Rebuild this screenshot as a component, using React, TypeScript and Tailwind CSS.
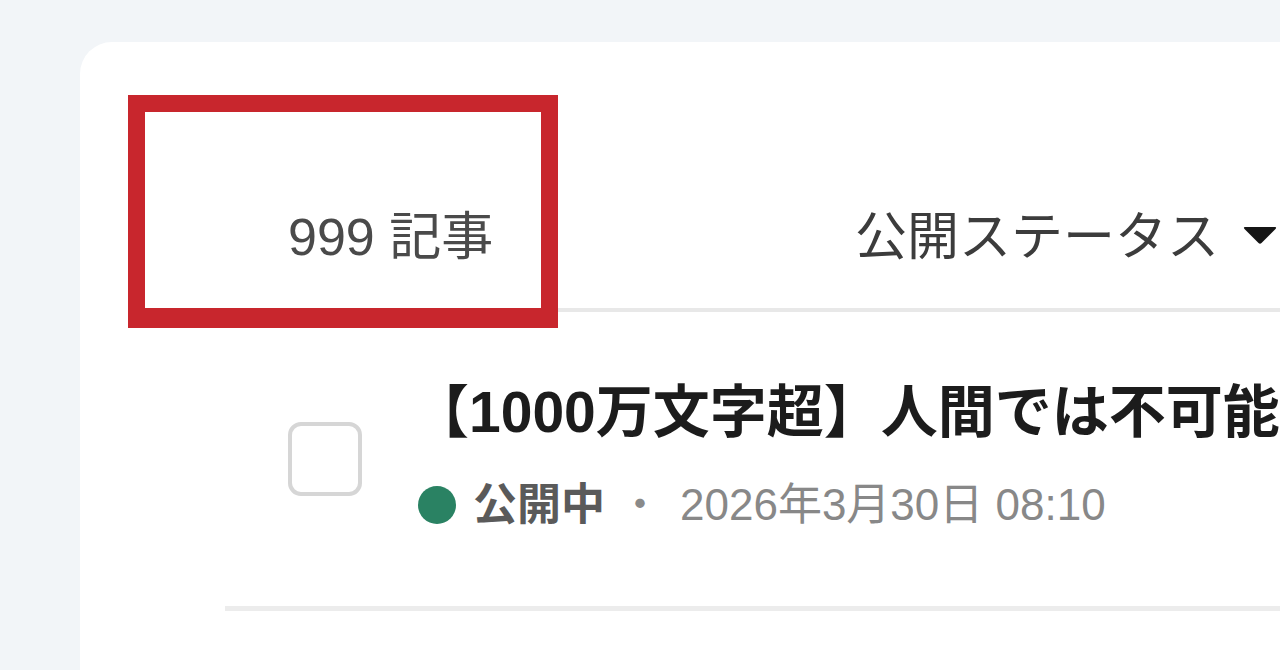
import React from "react";

const FONT = {
  fontFamily: '"Liberation Sans", "Noto Sans CJK JP", sans-serif',
};

export default function App() {
  return (
    <div
      className="w-[1280px] h-[670px] overflow-hidden bg-[#f2f5f8] pt-[42px] pl-[80px]"
      style={FONT}
    >
      <div className="relative w-[1300px] h-[700px] bg-white rounded-tl-[32px] pl-[145px]">
        {/* Header */}
        <div className="flex items-end h-[270px] pb-[45px] border-b-[4px] border-[#e8e8e8]">
          <div className="w-[630px] pl-[63px] text-[52px] leading-none text-[#4a4a4a] whitespace-nowrap">
            999 記事
          </div>
          <div className="flex items-center text-[52px] leading-none text-[#3c3c3c] whitespace-nowrap">
            <span>公開ステータス</span>
            <svg
              className="ml-[24px] mt-[-4px]"
              width="34"
              height="20"
              viewBox="0 0 34 20"
            >
              <path
                d="M2 2 L32 2 Q34 2 32.5 4 L18.5 18 Q17 19.5 15.5 18 L1.5 4 Q0 2 2 2 Z"
                fill="#151515"
              />
            </svg>
          </div>
        </div>

        {/* Row */}
        <div className="flex items-center h-[299px] border-b-[5px] border-[#ececec]">
          <div className="pl-[63px]">
            <div className="w-[74px] h-[74px] rounded-[13px] border-[4px] border-[#d6d6d6] bg-white" />
          </div>
          <div className="ml-[56px] flex flex-col pb-[7px]">
            <div className="-ml-[6px] text-[57px] leading-none font-bold text-[#1c1c1c] whitespace-nowrap">
              【1000万文字超】人間では不可能な量の文章をAIに書かせてみた
            </div>
            <div className="mt-[42px] flex items-center text-[44px] leading-none whitespace-nowrap">
              <span className="w-[38px] h-[38px] rounded-full bg-[#2a8263]" />
              <span className="ml-[17px] font-bold text-[#5a5a5a]">公開中</span>
              <span className="ml-[13px] text-[#8a8a8a]">・</span>
              <span className="ml-[18px] text-[#888888]">2026年3月30日 08:10</span>
            </div>
          </div>
        </div>

        {/* Annotation highlight */}
        <div className="absolute left-[48px] top-[53px] w-[430px] h-[233px] border-[17px] border-b-[20px] border-[#c8262d]" />
      </div>
    </div>
  );
}
